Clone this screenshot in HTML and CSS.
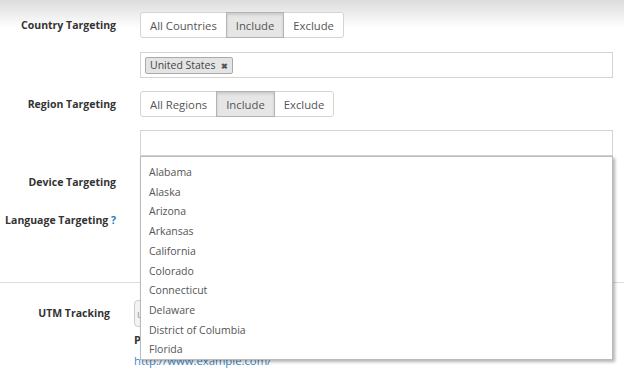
FILE: index.html
```html
<!DOCTYPE html>
<html>
    <head>
        <title>Targeting</title>
        <link rel="stylesheet" href="styles.css">
    </head>
    <body>
        <div class="targeting">
            <div class="row first">
                <div class="label">Country Targeting</div>
                <div class="btn-group">
                    <span class="btn">All Countries</span>
                    <span class="btn active">Include</span>
                    <span class="btn">Exclude</span>
                </div>
            </div>
            <div class="row">
                <div class="label"></div>
                <div class="tag-box">
                    <span class="tag">United States <b>&#x2716;</b></span>
                </div>
            </div>
            <div class="row">
                <div class="label">Region Targeting</div>
                <div class="btn-group">
                    <span class="btn">All Regions</span>
                    <span class="btn active">Include</span>
                    <span class="btn">Exclude</span>
                </div>
            </div>
            <div class="row">
                <div class="label"></div>
                <div class="tag-box open">
                    <ul class="dropdown">
                        <li>Alabama</li>
                        <li>Alaska</li>
                        <li>Arizona</li>
                        <li>Arkansas</li>
                        <li>California</li>
                        <li>Colorado</li>
                        <li>Connecticut</li>
                        <li>Delaware</li>
                        <li>District of Columbia</li>
                        <li>Florida</li>
                    </ul>
                </div>
            </div>
            <div class="row short">
                <div class="label">Device Targeting</div>
            </div>
            <div class="row tall">
                <div class="label">Language Targeting <span class="help">?</span></div>
            </div>
        </div>

        <div class="tracking">
            <div class="row">
                <div class="label">UTM Tracking</div>
                <div class="utm-field">
                    <div class="utm-input">utm_source=</div>
                    <div class="preview">Preview:</div>
                    <a class="preview-link" href="#">http://www.example.com/</a>
                </div>
            </div>
        </div>
    </body>
</html>
```

FILE: styles.css
```css
body {
    margin: 0;
    font-family: "Open Sans", "Liberation Sans", sans-serif;
    font-size: 11px;
    color: #333;
    background: linear-gradient(#dcdcdc, #fff 28px) no-repeat;
    height: 371px;
    overflow: hidden;
}
.targeting {
    padding-top: 12px;
    border-bottom: 1px solid #ddd;
}
.row {
    display: flex;
    align-items: flex-start;
    gap: 24px;
    margin-bottom: 13px;
    min-height: 26px;
}
.row.first {
    margin-bottom: 14px;
}
.row.short {
    margin-bottom: 12px;
}
.row.tall {
    min-height: 62px;
    margin-bottom: 13px;
}
.label {
    width: 116px;
    flex: none;
    text-align: right;
    font-weight: bold;
    font-size: 10.5px;
    line-height: 26px;
    white-space: nowrap;
    color: #333;
}
.help {
    color: #2a7ab8;
}

.btn-group {
    display: flex;
    height: 26px;
}
.btn {
    display: flex;
    align-items: center;
    padding: 0 9px;
    border: 1px solid #d4d4d4;
    margin-left: -1px;
    color: #555;
    font-size: 11.3px;
    background: #fff;
}
.btn:first-child {
    margin-left: 0;
    border-radius: 3px 0 0 3px;
}
.btn:last-child {
    border-radius: 0 3px 3px 0;
}
.btn.active {
    background: #e6e6e6;
    border-color: #b3b3b3;
    box-shadow: inset 0 2px 3px rgba(0, 0, 0, 0.12);
    position: relative;
}

.tag-box {
    position: relative;
    width: 463px;
    height: 24px;
    border: 1px solid #d4d4d4;
    display: flex;
    align-items: center;
    padding: 0 4px;
}
.tag {
    display: inline-flex;
    align-items: center;
    gap: 5px;
    height: 15px;
    padding: 0 4px;
    background: #e4e4e4;
    border: 1px solid #aaa;
    border-radius: 2px;
    color: #444;
    font-size: 10.5px;
}
.tag b {
    font-size: 8px;
    color: #555;
}

.dropdown {
    position: absolute;
    top: 25px;
    left: -1px;
    width: 473px;
    height: 204px;
    box-sizing: border-box;
    margin: 0;
    padding: 6px 0 0;
    list-style: none;
    background: #fff;
    border: 1px solid #bbb;
    box-shadow: 2px 2px 3px rgba(0, 0, 0, 0.3);
    z-index: 2;
}
.dropdown li {
    padding-left: 8px;
    line-height: 19.7px;
    color: #555;
    font-size: 10.5px;
}

.tracking {
    padding-top: 17px;
}
.tracking .label {
    width: 110px;
    line-height: 27px;
}
.utm-field {
    display: flex;
    flex-direction: column;
}
.utm-input {
    width: 470px;
    height: 25px;
    line-height: 25px;
    padding-left: 2px;
    border: 1px solid #ccc;
    border-radius: 4px;
    background: #f3f3f3;
    color: #999;
    font-size: 11px;
}
.preview {
    margin-top: 5px;
    font-weight: bold;
    line-height: 16px;
}
.preview-link {
    margin-top: 5px;
    color: #3a87c8;
    text-decoration: none;
    font-size: 11.3px;
    line-height: 16px;
}
```
